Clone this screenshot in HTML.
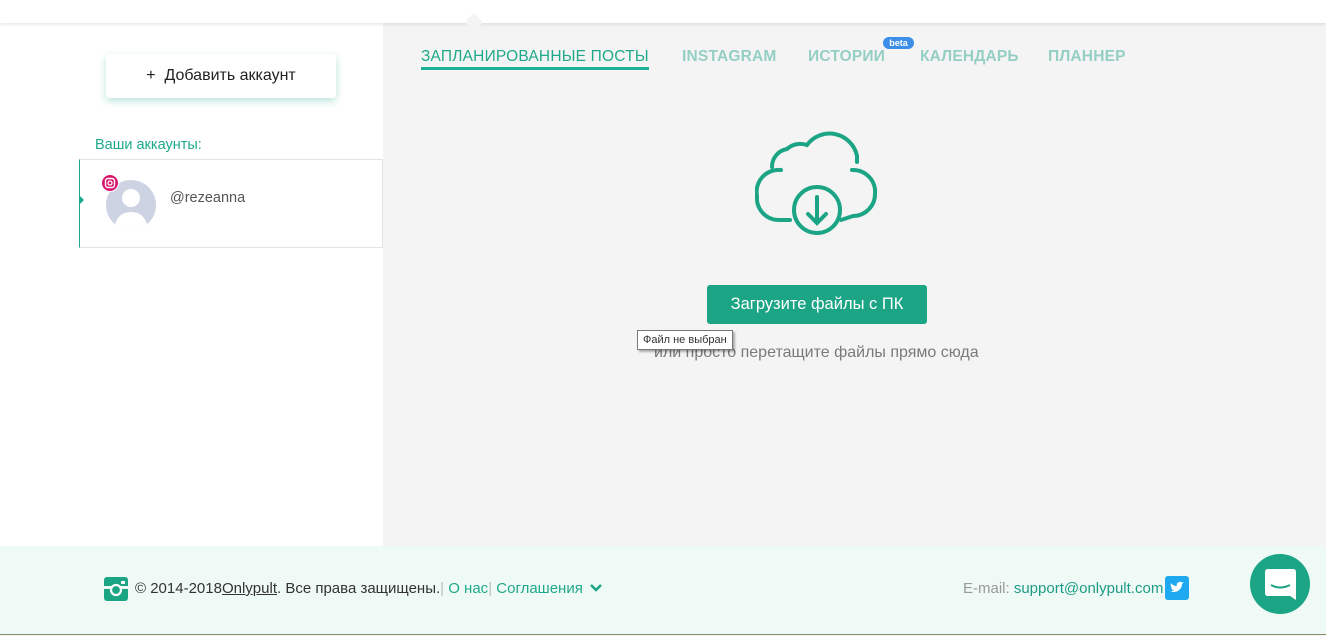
<!DOCTYPE html>
<html><head><meta charset="utf-8"><style>
*{margin:0;padding:0;box-sizing:border-box}
body{width:1326px;height:636px;overflow:hidden;position:relative;font-family:"Liberation Sans",sans-serif;background:#f4f4f4}
.top{position:absolute;left:0;top:0;width:1326px;height:23px;background:#fff;box-shadow:0 1px 4px rgba(0,0,0,.12);z-index:2}
.notch{position:absolute;left:468px;top:17px;width:12px;height:12px;background:#f4f4f4;transform:rotate(45deg);z-index:3;box-shadow:-1px -1px 2px rgba(0,0,0,.06)}
.left{position:absolute;left:0;top:23px;width:383px;height:523px;background:#fff}
.add{position:absolute;left:106px;top:54px;width:230px;height:44px;background:#fff;border-radius:3px;box-shadow:0 3px 8px rgba(26,166,134,.3);font-size:16px;color:#222;text-align:center;line-height:44px}
.your{position:absolute;left:95px;top:137px;font-size:14.5px;color:#1fa98a}
.acc{position:absolute;left:79px;top:159px;width:304px;height:89px;border:1px solid #e3e3e3;border-left:1px solid #1fa98a;background:#fff}
.tri{position:absolute;left:0;top:36px;border:4px solid transparent;border-left:4px solid #1fa98a}
.ava{position:absolute;left:26px;top:20px;width:50px;height:50px;border-radius:50%;background:#cdd3e3;overflow:hidden}
.ig{position:absolute;left:21px;top:14px;width:18px;height:18px;border-radius:50%;background:#d6156c;border:1px solid #fff}
.name{position:absolute;left:90px;top:30px;font-size:14.5px;color:#555}
.tabs{position:absolute;top:48px;font-size:15.5px;font-weight:bold;color:#95cfc3;letter-spacing:.2px}
.tab1{left:421px;color:#1fa98a;font-weight:normal;border-bottom:3px solid #1ab39a;padding-bottom:1px}
.beta{position:absolute;left:883px;top:37px;width:31px;height:12px;border-radius:6px;background:#3d8ee8;color:#fff;font-size:9px;font-weight:bold;text-align:center;line-height:12px}
.btn{position:absolute;left:707px;top:285px;width:220px;height:39px;background:#1ca585;border-radius:3px;color:#fff;font-size:16.5px;text-align:center;line-height:39px}
.hint{position:absolute;left:654px;top:344px;font-size:16px;color:#7a7a7a}
.tip{position:absolute;left:637px;top:330px;height:20px;padding:0 5px;border:1px solid #777;background:#fff;font-size:11px;color:#333;line-height:18px;box-shadow:2px 2px 2px rgba(0,0,0,.3)}
.foot{position:absolute;left:0;top:546px;width:1326px;height:89px;background:#effaf7;border-bottom:1px solid #8b8b6a}
.foot div{position:absolute;font-size:15px}
</style></head><body>
<div class="top"></div><div class="notch"></div>
<div class="left">
</div>
<div class="add">+&nbsp;&nbsp;Добавить аккаунт</div>
<div class="your">Ваши аккаунты:</div>
<div class="acc"><div class="tri"></div>
<div class="ava"><svg width="50" height="50"><circle cx="25" cy="18" r="9" fill="#fff"/><path d="M8 50 Q10 32 25 32 Q40 32 42 50Z" fill="#fff"/></svg></div>
<div class="ig"><svg width="16" height="16"><rect x="3.5" y="3.5" width="9" height="9" rx="2.5" fill="none" stroke="#fff" stroke-width="1.4"/><circle cx="8" cy="8" r="2" fill="none" stroke="#fff" stroke-width="1.3"/></svg></div>
<div class="name">@rezeanna</div></div>
<div class="tabs tab1">ЗАПЛАНИРОВАННЫЕ ПОСТЫ</div>
<div class="tabs" style="left:682px">INSTAGRAM</div>
<div class="tabs" style="left:808px">ИСТОРИИ</div>
<div class="beta">beta</div>
<div class="tabs" style="left:920px">КАЛЕНДАРЬ</div>
<div class="tabs" style="left:1048px">ПЛАННЕР</div>
<svg style="position:absolute;left:755px;top:130px" width="124" height="106" viewBox="0 0 124 106" fill="none" stroke="#1ca585" stroke-width="4" stroke-linecap="round">
<path d="M32 19 A20 20 0 0 1 52 15 A28 28 0 0 1 102 26 L102 32"/>
<path d="M17 37 A18 18 0 0 1 32 19"/>
<path d="M26 40 A22 22 0 0 0 2 66 A22 22 0 0 0 23 90 L35 90"/>
<path d="M97 40 A22 22 0 0 1 120 64 A22 22 0 0 1 98 86 L86 90"/>
<circle cx="62" cy="80" r="23"/>
<path d="M62 67 L62 92 M53 84 L62 93 L71 84"/>
</svg>
<div class="btn">Загрузите файлы с ПК</div>
<div class="hint">или просто перетащите файлы прямо сюда</div>
<div class="tip">Файл не выбран</div>
<div class="foot">
<svg style="position:absolute;left:104px;top:31px" width="24" height="24"><rect width="24" height="24" rx="3" fill="#1ca585"/><rect x="0" y="9" width="24" height="3" fill="#effaf7"/><circle cx="12" cy="13" r="5" fill="#1ca585" stroke="#fff" stroke-width="2.2"/><rect x="17" y="4" width="4" height="3" fill="#fff"/></svg>
<div style="left:135px;top:34px;color:#333">© 2014-2018<u>Onlypult</u>. Все права защищены.<span style="color:#bbb">|</span> <span style="color:#1fa98a">О нас</span><span style="color:#bbb">|</span> <span style="color:#1fa98a">Соглашения</span></div>
<svg style="position:absolute;left:590px;top:37px" width="12" height="10"><path d="M1 2 L6 7 L11 2" stroke="#1ca585" stroke-width="2.5" fill="none"/></svg>
<div style="left:963px;top:34px;color:#999">E-mail: <span style="color:#1c9c85">support@onlypult.com</span></div>
<svg style="position:absolute;left:1165px;top:30px" width="24" height="24"><rect width="24" height="24" rx="3" fill="#1da8f0"/><path d="M5 15 Q9 17 13 15 Q17 12 17 8 L19 6 L17 6.5 Q15 5 13 6.5 Q11 8 12 10 Q8 10 6 7 Q5 10 7 12 L6 12 Q7 14 9 14 Q7 15.5 5 15Z" fill="#fff"/></svg>
<div style="left:1250px;top:8px;width:60px;height:60px;border-radius:50%;background:#1ca585"><svg style="position:absolute;left:15px;top:15px" width="31" height="31"><path d="M3 0 H28 Q31 0 31 3 V31 L25 27 H3 Q0 27 0 24 V3 Q0 0 3 0Z" fill="#fff"/><path d="M6 16 Q15 21 25 16" stroke="#1ca585" stroke-width="2" fill="none"/></svg></div>
</div>
</body></html>
